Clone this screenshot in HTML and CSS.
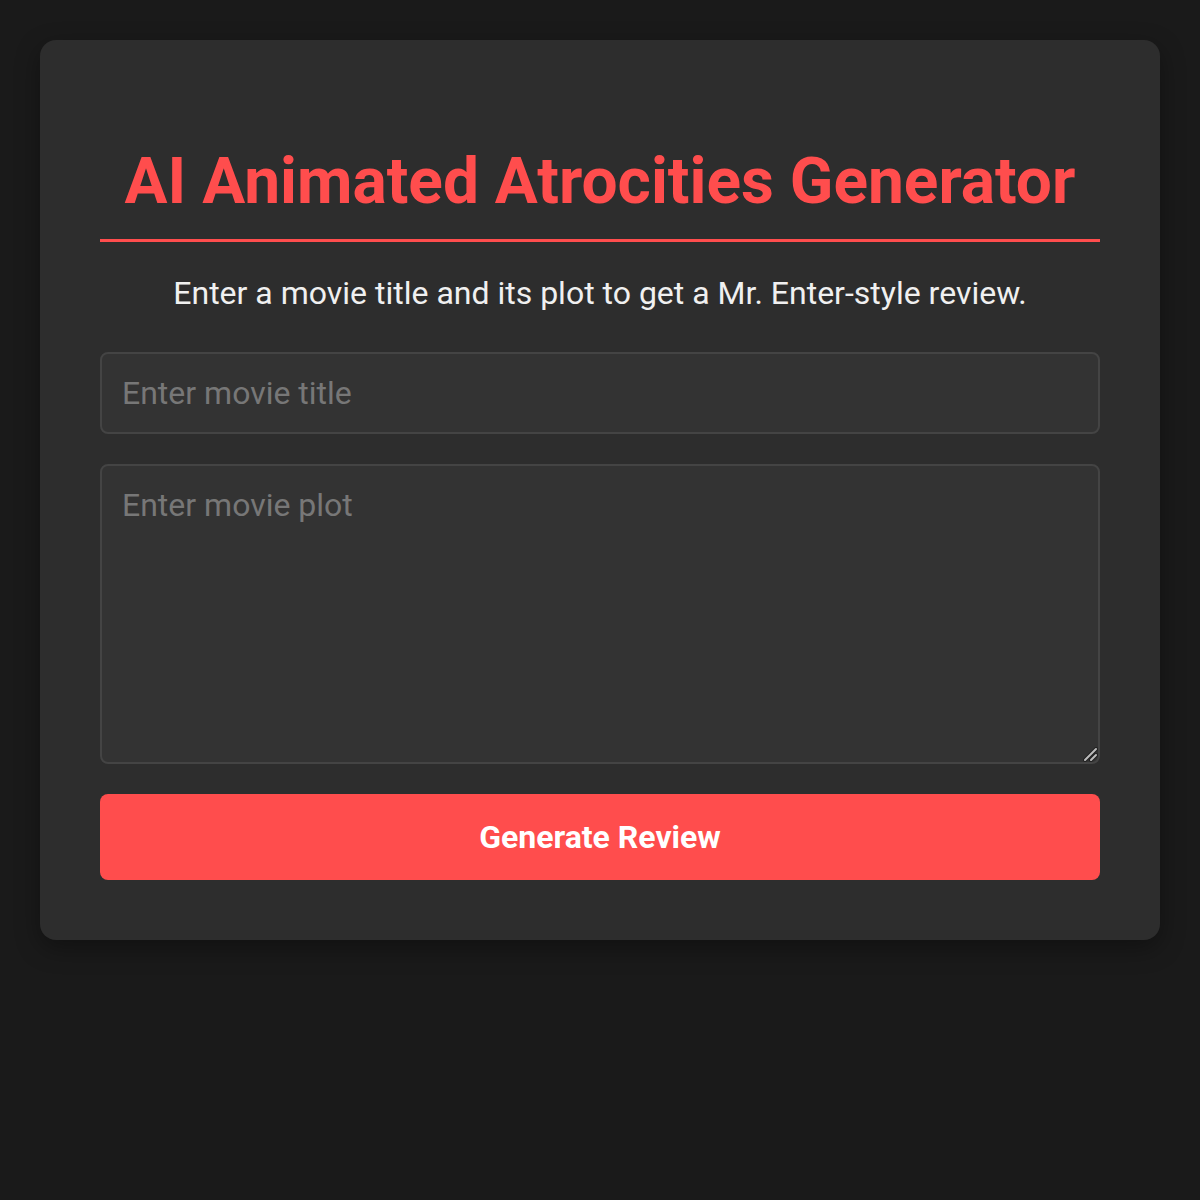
FILE: index.html
```html
<!DOCTYPE html>
<html lang="en">

<head>
  <meta charset="UTF-8">
  <meta name="viewport" content="width=device-width, initial-scale=1.0">
  <title>AI Animated Atrocities Generator</title>
  <link rel="stylesheet" href="styles.css">
</head>

<body>
  <div class="container">
    <h1 class="title">AI Animated Atrocities Generator</h1>
    <p class="intro">Enter a movie title and its plot to get a Mr. Enter-style review.</p>

    <form class="review-form">
      <input type="text" class="field" placeholder="Enter movie title">
      <textarea class="field field-plot" placeholder="Enter movie plot"></textarea>
      <button type="button" class="generate-btn">Generate Review</button>
    </form>
  </div>
</body>

</html>
```

FILE: styles.css
```css
body {
  font-family: Roboto, "Liberation Sans", sans-serif;
  background-color: #1a1a1a;
  color: #f0f0f0;
  margin: 0;
  padding: 40px;
}

.container {
  background-color: #2d2d2d;
  border-radius: 16px;
  padding: 60px;
  box-shadow: 0 8px 24px rgba(0, 0, 0, 0.35);
}

.title {
  margin: 44px 0 0;
  padding-bottom: 20px;
  border-bottom: 3px solid #ff4d4d;
  color: #ff4d4d;
  font-size: 64px;
  font-weight: 700;
  text-align: center;
}

.intro {
  margin: 32px 0 40px;
  font-size: 32px;
  text-align: center;
}

.review-form {
  display: flex;
  flex-direction: column;
  gap: 30px;
}

.field {
  box-sizing: border-box;
  width: 100%;
  padding: 20px;
  border: 2px solid #444;
  border-radius: 8px;
  background-color: #333;
  color: #f0f0f0;
  font-family: inherit;
  font-size: 32px;
  outline: none;
  color-scheme: dark;
}

.field::placeholder {
  color: #777;
}

.field-plot {
  height: 300px;
  resize: vertical;
}

/* grip drawn to match the larger dark-theme resizer */
.field-plot::-webkit-resizer {
  background: url("data:image/svg+xml,%3Csvg xmlns='http://www.w3.org/2000/svg' width='16' height='16'%3E%3Cg stroke-linecap='round'%3E%3Cpath d='M3 14 L14 3 M9 14 L14 9' stroke='%23222' stroke-width='4'/%3E%3Cpath d='M3 14 L14 3 M9 14 L14 9' stroke='%23bbb' stroke-width='2'/%3E%3C/g%3E%3C/svg%3E") no-repeat right bottom;
}

.generate-btn {
  height: 86px;
  border: 0;
  border-radius: 8px;
  background-color: #ff4d4d;
  color: #fff;
  font-family: inherit;
  font-size: 32px;
  font-weight: 700;
  cursor: pointer;
}
```
